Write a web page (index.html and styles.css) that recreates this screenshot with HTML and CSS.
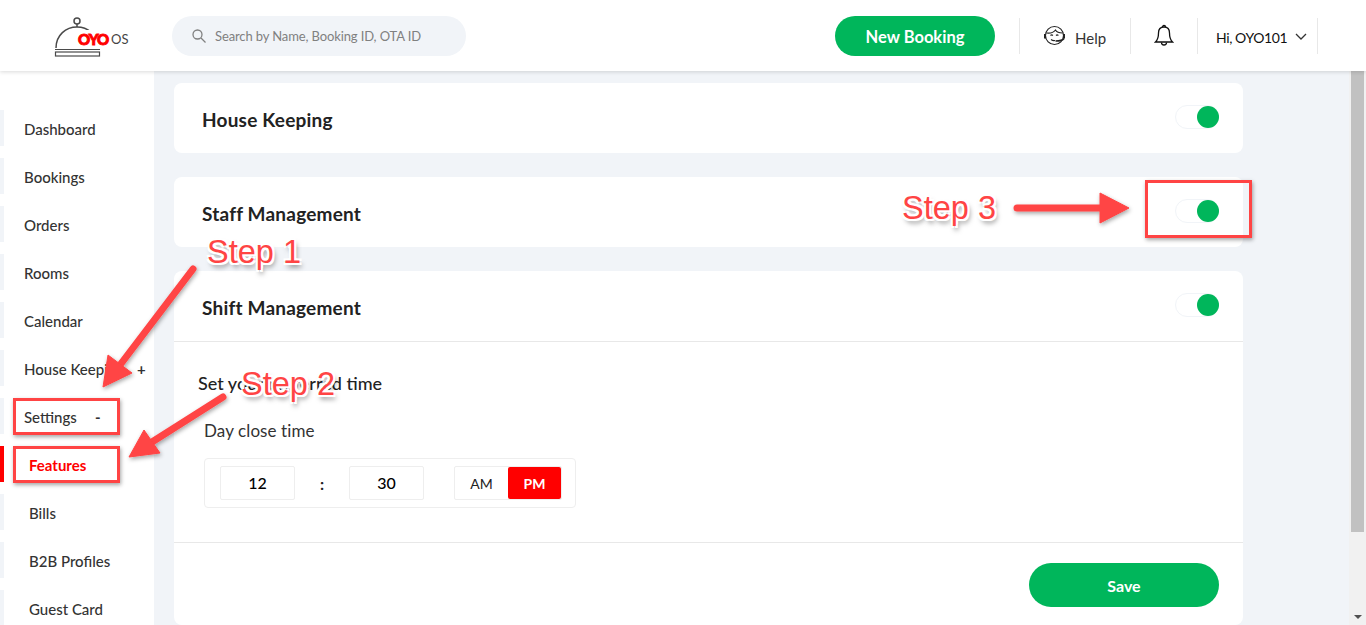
FILE: index.html
```html
<!DOCTYPE html>
<html lang="en">
<head>
  <meta charset="UTF-8" />
  <title>OYO OS • Features</title>
  <link rel="stylesheet" href="styles.css">
</head>
<body>

  <!-- Top bar -->
  <header class="topbar">
    <div class="logo">
      <svg class="logo-bell" width="60" height="44" viewBox="0 0 60 44">
        <circle cx="23" cy="5" r="3" fill="none" stroke="#4a4a4a" stroke-width="1.5"/>
        <path d="M23 8v3" stroke="#4a4a4a" stroke-width="1.5"/>
        <path d="M2 32C2 19 12 11 23 11c5 0 10 1.500 14 5" fill="none" stroke="#4a4a4a" stroke-width="1.500"/>
        <rect x="1.500" y="36" width="44" height="4" fill="none" stroke="#4a4a4a" stroke-width="1.200"/>
        <path d="M1 33.500h45" stroke="#4a4a4a" stroke-width="1.200"/>
      </svg>
      <span class="logo-oyo">OYO</span><span class="logo-os">OS</span>
    </div>
    <div class="search">
      <svg width="14" height="14" viewBox="0 0 14 14" fill="none" stroke="#808080" stroke-width="1.300">
        <circle cx="5.500" cy="5.500" r="4.500"/><path d="M9 9l4.500 4.500"/>
      </svg>
      <span>Search by Name, Booking ID, OTA ID</span>
    </div>
    <div class="top-actions">
      <button class="new-booking">New Booking</button>
      <div class="top-cell help">
        <svg width="23" height="22" viewBox="0 0 23 22" fill="none" stroke="#222" stroke-width="1.100">
          <circle cx="11.500" cy="10.500" r="9"/>
          <path d="M3.500 8c3.500 .5 7-.5 9-3 1 1.800 3.500 3 7 3"/>
          <path d="M7.500 10.500q1.200-1.200 2.400 0M13 10.500q1.200-1.200 2.400 0M8 14.500q2 1.500 4 1"/>
          <path d="M2 9v4.500M21 9v4.500" stroke-width="2"/>
          <path d="M21 13.500c-1 1.500-4 2.500-8.500 2.500" stroke-width="1.600"/>
        </svg>
        <span>Help</span>
      </div>
      <div class="top-cell bell">
        <svg width="20" height="24" viewBox="0 0 20 24" fill="none" stroke="#111" stroke-width="1.300">
          <path d="M10 3c-3.500 0-5.500 2.500-5.500 6 0 5-1 7-3 9h17c-2-2-3-4-3-9 0-3.500-2-6-5.500-6z"/>
          <path d="M8.500 3a1.500 1.500 0 0 1 3 0M7.500 18.500a2.500 2.500 0 0 0 5 0"/>
        </svg>
      </div>
      <div class="top-cell user">
        <span>Hi, OYO101</span>
        <svg width="12" height="8" viewBox="0 0 12 8" fill="none" stroke="#333" stroke-width="1.300"><path d="M1 1l5 5 5-5"/></svg>
      </div>
    </div>
  </header>

  <div class="layout">
    <!-- Sidebar -->
    <nav class="sidebar">
      <div class="nav-item">Dashboard</div>
      <div class="nav-item">Bookings</div>
      <div class="nav-item">Orders</div>
      <div class="nav-item">Rooms</div>
      <div class="nav-item">Calendar</div>
      <div class="nav-item">House Keeping <b class="sign">+</b></div>
      <div class="nav-item">Settings <b class="sign minus">-</b></div>
      <div class="nav-item sub active">Features</div>
      <div class="nav-item sub">Bills</div>
      <div class="nav-item sub">B2B Profiles</div>
      <div class="nav-item sub">Guest Card</div>
    </nav>

    <!-- Content -->
    <main class="content">
      <section class="card row">
        <h2>House Keeping</h2>
        <div class="toggle"></div>
      </section>
      <section class="card row">
        <h2>Staff Management</h2>
        <div class="toggle"></div>
      </section>
      <section class="card shift">
        <div class="row">
          <h2>Shift Management</h2>
          <div class="toggle"></div>
        </div>
        <div class="shift-body">
          <h3>Set your preferred time</h3>
          <div class="field-label">Day close time</div>
          <div class="time-box">
            <div class="time-input">12</div>
            <span class="colon">:</span>
            <div class="time-input">30</div>
            <div class="ampm">
              <div class="am">AM</div>
              <div class="pm">PM</div>
            </div>
          </div>
        </div>
        <div class="shift-foot">
          <button class="save">Save</button>
        </div>
      </section>
    </main>

    <div class="scrollbar">
      <div class="thumb"></div>
      <div class="scroll-down"></div>
    </div>
  </div>

  <!-- Annotations drawn over the page -->
  <div class="mark mark-settings"></div>
  <div class="mark mark-features"></div>
  <div class="mark mark-toggle"></div>
  <div class="step step1">Step 1</div>
  <div class="step step2">Step 2</div>
  <div class="step step3">Step 3</div>
  <svg class="arrows" width="1366" height="625" viewBox="0 0 1366 625">
    <defs>
      <filter id="sh" x="-20%" y="-20%" width="140%" height="140%">
        <feDropShadow dx="1" dy="2" stdDeviation="2" flood-color="#000" flood-opacity=".35"/>
      </filter>
    </defs>
    <g fill="#ff4444" stroke="#ff4444" filter="url(#sh)">
      <path d="M193 269L120 365" stroke-width="7" stroke-linecap="round"/>
      <path d="M103 387L108 355 132 373z" stroke-width="1"/>
      <path d="M223 397L152 442" stroke-width="7" stroke-linecap="round"/>
      <path d="M129 457L144 430 160 453z" stroke-width="1"/>
      <path d="M1017 208H1100" stroke-width="7" stroke-linecap="round"/>
      <path d="M1129 208L1100 193V223z" stroke-width="1"/>
    </g>
  </svg>

</body>
</html>
```

FILE: styles.css
```css
* {
  margin: 0;
  padding: 0;
  box-sizing: border-box;
}
html, body {
  height: 625px;
  overflow: hidden;
}
body {
  font-family: 'Lato', 'Liberation Sans', sans-serif;
  background: #f1f4f8;
  color: #222;
  position: relative;
}

/* --- Top bar --- */
.topbar {
  height: 71px;
  background: #fff;
  display: flex;
  align-items: center;
  box-shadow: 0 1px 4px rgba(0,0,0,0.15);
  position: relative;
  z-index: 2;
}
.logo {
  width: 172px;
  height: 71px;
  padding: 16px 0 0 54px;
  display: flex;
  align-items: flex-start;
  position: relative;
}
.logo-oyo {
  position: absolute;
  left: 77px;
  top: 30px;
  padding: 0 1px;
  background: #fff;
  font: 900 15px 'Lato', sans-serif;
  color: #f00;
  letter-spacing: -0.8px;
  -webkit-text-stroke: 0.9px #f00;
}
.logo-os {
  position: absolute;
  left: 111px;
  top: 31px;
  font-size: 13px;
  color: #444;
}
.search {
  width: 294px;
  height: 40px;
  border-radius: 20px;
  background: #f1f4f8;
  padding-left: 20px;
  display: flex;
  align-items: center;
  gap: 9px;
  font-size: 13px;
  letter-spacing: -0.12px;
  color: #808080;
}
.top-actions {
  margin-left: auto;
  margin-right: 48px;
  display: flex;
  align-items: center;
}
.new-booking {
  width: 160px;
  height: 40px;
  border: none;
  border-radius: 20px;
  padding-top: 2px;
  background: #00b65b;
  color: #fff;
  font: 700 16.5px 'Lato', sans-serif;
  margin-right: 24px;
}
.top-cell {
  height: 36px;
  border-left: 1px solid #e8e8e8;
  display: flex;
  align-items: center;
}
.help {
  width: 111px;
  padding-left: 23px;
  gap: 9px;
  font-size: 15px;
  color: #333;
}
.help span {
  margin-top: 5px;
}
.bell {
  width: 67px;
  justify-content: center;
}
.user {
  width: 121px;
  padding: 3px 0 0 18px;
  gap: 8px;
  font-size: 14px;
  letter-spacing: -0.4px;
  color: #111;
  border-right: 1px solid #e8e8e8;
}

/* --- Page layout --- */
.layout {
  display: flex;
  height: 554px;
}
.sidebar {
  width: 154px;
  background: #fff;
  padding-top: 39px;
  flex-shrink: 0;
}
.nav-item {
  height: 36px;
  margin-bottom: 12px;
  padding-left: 20px;
  line-height: 38px;
  font-size: 15px;
  font-weight: 500;
  white-space: nowrap;
  color: #333;
  border-left: 4px solid #f1f4f8;
  position: relative;
}
.nav-item.sub {
  padding-left: 25px;
}
.nav-item.active {
  color: #f00;
  font-weight: 700;
  border-left-color: #f00;
}
.sign {
  position: absolute;
  left: 133px;
  font-weight: 700;
}
.sign.minus {
  left: 91px;
}

/* --- Cards --- */
.content {
  flex: 1;
  padding: 12px 0 0 20px;
  overflow: hidden;
}
.card {
  width: 1069px;
  background: #fff;
  border-radius: 8px;
  margin-bottom: 24px;
}
.row {
  height: 70px;
  padding: 0 24px 0 28px;
  display: flex;
  align-items: center;
  justify-content: space-between;
}
h2 {
  font-size: 19px;
  font-weight: 700;
  letter-spacing: 0.2px;
  margin-top: 2px;
  color: #222;
}
.toggle {
  width: 44px;
  height: 24px;
  margin-top: -2px;
  border: 1px solid #f1f4f8;
  border-radius: 12px;
  position: relative;
}
.toggle::after {
  content: '';
  position: absolute;
  right: -1px;
  top: 0;
  width: 22px;
  height: 22px;
  border-radius: 50%;
  background: #00b65b;
}
.shift-body {
  border-top: 1px solid #e8e8e8;
  padding: 30px 24px 34px;
  height: 201px;
}
h3 {
  font-size: 18px;
  font-weight: 500;
  color: #222;
}
.field-label {
  margin: 26px 0 17px 6px;
  font-size: 17px;
  letter-spacing: 0.1px;
  color: #333;
}
.time-box {
  margin-left: 6px;
  width: 372px;
  height: 50px;
  border: 1px solid #eee;
  border-radius: 4px;
  padding-left: 15px;
  display: flex;
  align-items: center;
}
.time-input {
  width: 75px;
  height: 34px;
  border: 1px solid #eee;
  border-radius: 2px;
  text-align: center;
  line-height: 32px;
  font-size: 16px;
  font-weight: 500;
  color: #000;
}
.colon {
  width: 54px;
  text-align: center;
  font-weight: 700;
}
.ampm {
  margin-left: 30px;
  width: 108px;
  height: 34px;
  border: 1px solid #eee;
  border-radius: 2px;
  display: flex;
  font-size: 14px;
  line-height: 34px;
  text-align: center;
}
.am {
  width: 53px;
}
.pm {
  width: 53px;
  background: #f00;
  color: #fff;
  font-weight: 700;
  border-radius: 2px;
}
.shift-foot {
  border-top: 1px solid #e8e8e8;
  padding: 20px 24px 0 0;
  height: 83px;
  display: flex;
  justify-content: flex-end;
}
.save {
  width: 190px;
  height: 44px;
  border: none;
  border-radius: 22px;
  background: #00b65b;
  color: #fff;
  font: 700 16px 'Lato', sans-serif;
}

/* --- Scrollbar --- */
.scrollbar {
  width: 17px;
  background: #f1f1f1;
  flex-shrink: 0;
  position: relative;
}
.thumb {
  height: 461px;
  margin: 0 2px;
  background: #c1c1c1;
}
.scroll-down {
  position: absolute;
  left: 5px;
  bottom: 6px;
  border-left: 4px solid transparent;
  border-right: 4px solid transparent;
  border-top: 4px solid #505050;
}

/* --- Annotations --- */
.mark {
  position: absolute;
  border: 3px solid #ff4444;
  box-shadow: 1px 2px 4px rgba(0,0,0,0.35);
  z-index: 3;
}
.mark-settings { left: 13px; top: 398px; width: 107px; height: 37px; }
.mark-features { left: 13px; top: 446px; width: 107px; height: 37px; }
.mark-toggle { left: 1145px; top: 180px; width: 107px; height: 58px; }
.step {
  position: absolute;
  z-index: 4;
  font: 400 32.5px 'Liberation Sans', sans-serif;
  color: #ff4444;
  text-shadow: -2px -2px 0 #fff, 2px -2px 0 #fff, -2px 2px 0 #fff, 2px 2px 0 #fff, 2px 4px 5px rgba(0,0,0,0.5);
}
.step1 { left: 207px; top: 234px; }
.step2 { left: 241px; top: 366px; }
.step3 { left: 902px; top: 190px; }
.arrows {
  position: absolute;
  left: 0;
  top: 0;
  z-index: 3;
  pointer-events: none;
}
```
